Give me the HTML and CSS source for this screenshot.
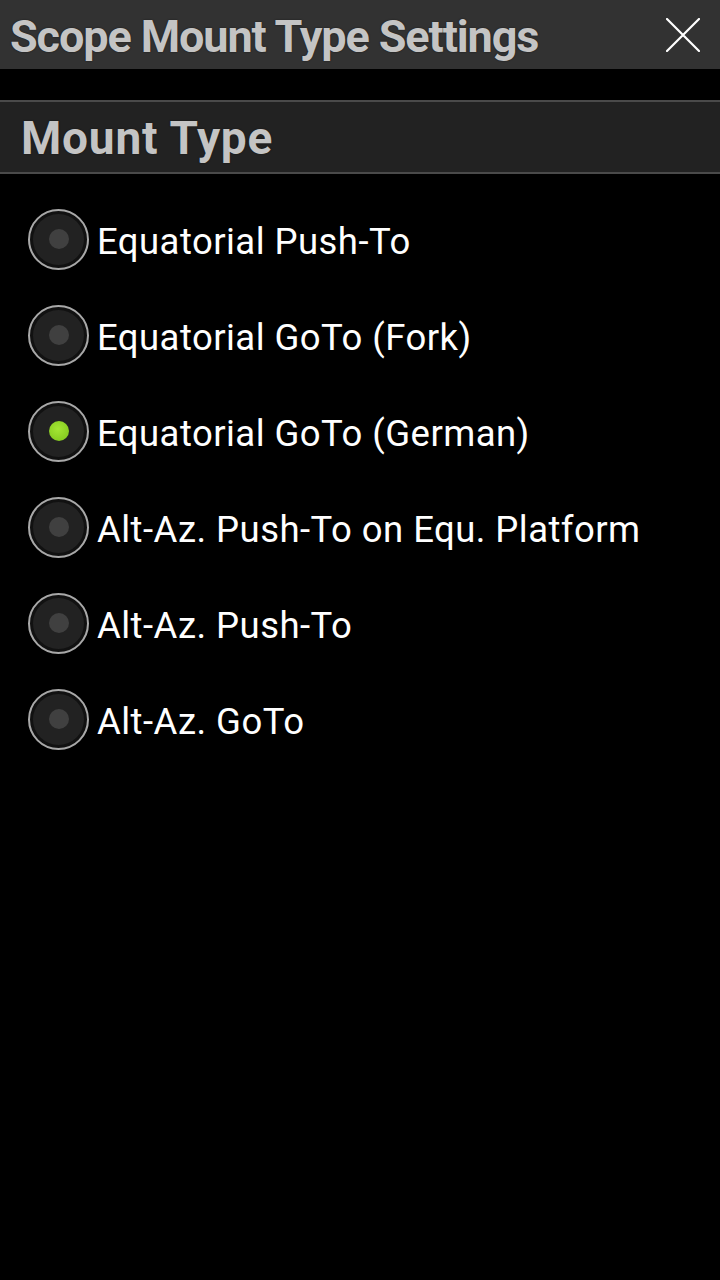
FILE: index.html
```html
<!DOCTYPE html>
<html>
<head>
<meta charset="utf-8">
<link rel="stylesheet" href="styles.css">
</head>
<body>
<div class="titlebar">
  <div class="title">Scope Mount Type Settings</div>
  <svg class="close" width="34" height="34" viewBox="0 0 34 34"><path d="M1 1 L33 33 M33 1 L1 33" stroke="#fff" stroke-width="2.2" stroke-linecap="round"/></svg>
</div>
<div class="section">Mount Type</div>
<ul class="options">
  <li class="option"><span class="radio"><span class="dot"></span></span><span class="label">Equatorial Push-To</span></li>
  <li class="option"><span class="radio"><span class="dot"></span></span><span class="label">Equatorial GoTo (Fork)</span></li>
  <li class="option checked"><span class="radio"><span class="dot"></span></span><span class="label">Equatorial GoTo (German)</span></li>
  <li class="option"><span class="radio"><span class="dot"></span></span><span class="label">Alt-Az. Push-To on Equ. Platform</span></li>
  <li class="option"><span class="radio"><span class="dot"></span></span><span class="label">Alt-Az. Push-To</span></li>
  <li class="option"><span class="radio"><span class="dot"></span></span><span class="label">Alt-Az. GoTo</span></li>
</ul>
</body>
</html>
```
FILE: styles.css
```css
html, body {
  margin: 0;
  padding: 0;
  background: #000;
  width: 720px;
  height: 1280px;
  overflow: hidden;
  font-family: Roboto, "Noto Sans", sans-serif;
}
.titlebar {
  height: 69px;
  background: #323232;
  display: flex;
  align-items: center;
  justify-content: space-between;
  padding: 0 20px 0 10px;
  box-sizing: border-box;
}
.title {
  color: #c4c4c4;
  font-weight: 700;
  font-size: 45px;
  letter-spacing: -1.1px;
  margin-top: 3px;
  text-shadow: 0 0 1.5px #111;
}
.close {
  display: block;
  margin-top: 1px;
}
.section {
  margin-top: 31px;
  height: 70px;
  background: #222;
  border-top: 2px solid #4a4a4a;
  border-bottom: 2px solid #4a4a4a;
  color: #c4c4c4;
  font-weight: 700;
  font-size: 46px;
  letter-spacing: 0.8px;
  line-height: 72px;
  padding-left: 21px;
  text-shadow: 0 0 1.5px #111;
}
.options {
  list-style: none;
  margin: 0;
  padding: 17px 0 0 28px;
}
.option {
  display: flex;
  align-items: center;
  height: 96px;
}
.radio {
  width: 61px;
  height: 61px;
  box-sizing: border-box;
  border-radius: 50%;
  border: 2px solid #a8a8a8;
  background: #222;
  box-shadow: inset 0 0 0 3px #111;
  display: flex;
  align-items: center;
  justify-content: center;
  flex: none;
}
.dot {
  width: 20px;
  height: 20px;
  border-radius: 50%;
  background: #404040;
}
.checked .dot {
  background: radial-gradient(circle at 45% 40%, #a4e634, #7cc21a);
}
.label {
  color: #fff;
  font-size: 36.5px;
  letter-spacing: 0.45px;
  margin-left: 8px;
  margin-top: 4px;
}
```
